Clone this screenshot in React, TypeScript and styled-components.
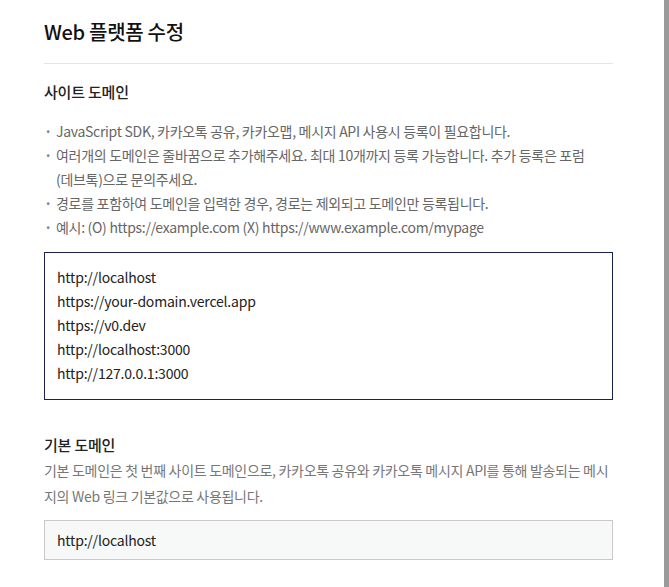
import React from 'react';
import styled, { createGlobalStyle } from 'styled-components';

const GlobalStyle = createGlobalStyle`
  html, body {
    margin: 0;
    padding: 0;
    background: #fff;
  }
  body {
    font-family: 'Noto Sans CJK KR', 'Noto Sans', sans-serif;
    -webkit-font-smoothing: antialiased;
  }
`;

const Page = styled.div`
  display: flex;
  width: 669px;
  height: 587px;
  overflow: hidden;
`;

const Panel = styled.div`
  flex: 1;
  padding: 0 51px 0 44px;
  background: #fff;
`;

const Backdrop = styled.div`
  width: 5px;
  background: #9a9a9a;
`;

const Title = styled.h2`
  margin: 0;
  padding: 18px 0 17px;
  font-size: 20px;
  line-height: 28px;
  font-weight: 500;
  color: #111;
  letter-spacing: -0.3px;
  border-bottom: 1px solid #e5e5e5;
`;

const SectionTitle = styled.h3`
  margin: 0;
  font-size: 15px;
  line-height: 22px;
  font-weight: 500;
  color: #222;
  letter-spacing: -0.2px;
`;

const Section = styled.section<{ $top: number }>`
  padding-top: ${p => p.$top}px;
`;

const Notes = styled.ul`
  list-style: none;
  margin: 16px 0 0;
  padding: 0;
`;

const Note = styled.li`
  position: relative;
  padding-left: 12px;
  font-size: 14px;
  line-height: 24px;
  color: #666;
  letter-spacing: -0.3px;
  word-break: keep-all;

  &::before {
    content: '·';
    position: absolute;
    left: 0;
    top: 0;
    font-weight: 700;
    color: #888;
  }
`;

const DomainBox = styled.div`
  margin-top: 13px;
  border: 1px solid #1b2150;
  padding: 12px 12px;
  height: 148px;
  box-sizing: border-box;
`;

const DomainLine = styled.div`
  font-size: 14px;
  line-height: 24px;
  color: #222;
  letter-spacing: -0.2px;
`;

const Desc = styled.p`
  margin: 1px 0 0;
  font-size: 14px;
  line-height: 26px;
  color: #777;
  letter-spacing: -0.3px;
`;

const ReadOnlyInput = styled.div`
  margin-top: 11px;
  height: 40px;
  box-sizing: border-box;
  border: 1px solid #c9c9c9;
  background: #f7f8f8;
  padding: 0 12px;
  display: flex;
  align-items: center;
  font-size: 14px;
  color: #222;
  letter-spacing: -0.2px;
`;

const notes = [
  'JavaScript SDK, 카카오톡 공유, 카카오맵, 메시지 API 사용시 등록이 필요합니다.',
  '여러개의 도메인은 줄바꿈으로 추가해주세요. 최대 10개까지 등록 가능합니다. 추가 등록은 포럼 (데브톡)으로 문의주세요.',
  '경로를 포함하여 도메인을 입력한 경우, 경로는 제외되고 도메인만 등록됩니다.',
  '예시: (O) https://example.com (X) https://www.example.com/mypage'
];

const domains = [
  'http://localhost',
  'https://your-domain.vercel.app',
  'https://v0.dev',
  'http://localhost:3000',
  'http://127.0.0.1:3000'
];

const App: React.FC = () => {
  return (
    <>
      <GlobalStyle />
      <Page>
        <Panel>
          <Title>Web 플랫폼 수정</Title>

          <Section $top={17}>
            <SectionTitle>사이트 도메인</SectionTitle>
            <Notes>
              {notes.map(n => (
                <Note key={n}>{n}</Note>
              ))}
            </Notes>
            <DomainBox>
              {domains.map(d => (
                <DomainLine key={d}>{d}</DomainLine>
              ))}
            </DomainBox>
          </Section>

          <Section $top={34}>
            <SectionTitle>기본 도메인</SectionTitle>
            <Desc>
              기본 도메인은 첫 번째 사이트 도메인으로, 카카오톡 공유와 카카오톡 메시지 API를 통해 발송되는 메시지의 Web 링크 기본값으로 사용됩니다.
            </Desc>
            <ReadOnlyInput>http://localhost</ReadOnlyInput>
          </Section>
        </Panel>
        <Backdrop />
      </Page>
    </>
  );
};

export default App;
